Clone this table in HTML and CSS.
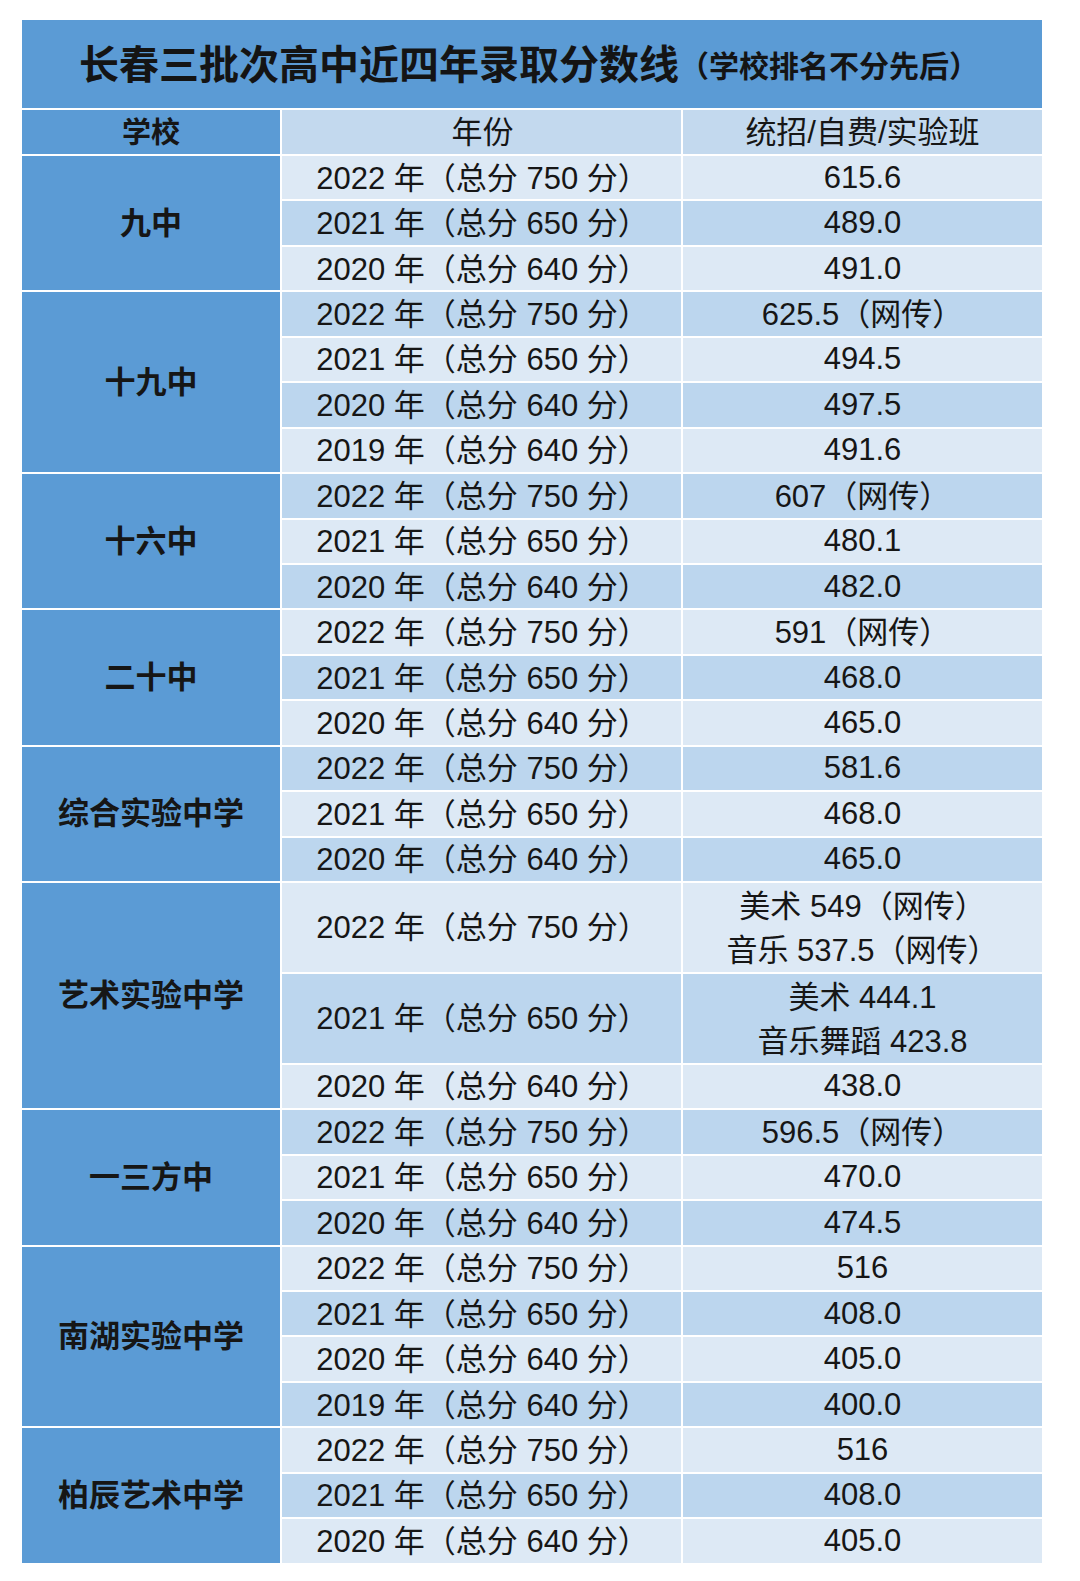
FILE: index.html
```html
<!DOCTYPE html>
<html lang="zh-CN">
<head>
<meta charset="utf-8">
<title>长春三批次高中近四年录取分数线</title>
<link rel="stylesheet" href="styles.css">
</head>
<body>
<div class="sheet">
  <div class="title"><span class="main">长春三批次高中近四年录取分数线</span><span class="sub">（学校排名不分先后）</span></div>
  <div class="hd school">学校</div>
  <div class="hd year">年份</div>
  <div class="hd val">统招/自费/实验班</div>

  <div class="school s3">九中</div>
  <div class="year l">2022 年（总分 750 分）</div><div class="val l">615.6</div>
  <div class="year m">2021 年（总分 650 分）</div><div class="val m">489.0</div>
  <div class="year l">2020 年（总分 640 分）</div><div class="val l">491.0</div>

  <div class="school s4">十九中</div>
  <div class="year m">2022 年（总分 750 分）</div><div class="val m cjk">625.5（网传）</div>
  <div class="year l">2021 年（总分 650 分）</div><div class="val l">494.5</div>
  <div class="year m">2020 年（总分 640 分）</div><div class="val m">497.5</div>
  <div class="year l">2019 年（总分 640 分）</div><div class="val l">491.6</div>

  <div class="school s3">十六中</div>
  <div class="year m">2022 年（总分 750 分）</div><div class="val m cjk">607（网传）</div>
  <div class="year l">2021 年（总分 650 分）</div><div class="val l">480.1</div>
  <div class="year m">2020 年（总分 640 分）</div><div class="val m">482.0</div>

  <div class="school s3">二十中</div>
  <div class="year l">2022 年（总分 750 分）</div><div class="val l cjk">591（网传）</div>
  <div class="year m">2021 年（总分 650 分）</div><div class="val m">468.0</div>
  <div class="year l">2020 年（总分 640 分）</div><div class="val l">465.0</div>

  <div class="school s3">综合实验中学</div>
  <div class="year m">2022 年（总分 750 分）</div><div class="val m">581.6</div>
  <div class="year l">2021 年（总分 650 分）</div><div class="val l">468.0</div>
  <div class="year m">2020 年（总分 640 分）</div><div class="val m">465.0</div>

  <div class="school s5">艺术实验中学</div>
  <div class="year l tall">2022 年（总分 750 分）</div><div class="val l tall"><span>美术 549（网传）</span><span>音乐 537.5（网传）</span></div>
  <div class="year m tall">2021 年（总分 650 分）</div><div class="val m tall"><span>美术 444.1</span><span>音乐舞蹈 423.8</span></div>
  <div class="year l">2020 年（总分 640 分）</div><div class="val l">438.0</div>

  <div class="school s3">一三方中</div>
  <div class="year m">2022 年（总分 750 分）</div><div class="val m cjk">596.5（网传）</div>
  <div class="year l">2021 年（总分 650 分）</div><div class="val l">470.0</div>
  <div class="year m">2020 年（总分 640 分）</div><div class="val m">474.5</div>

  <div class="school s4">南湖实验中学</div>
  <div class="year l">2022 年（总分 750 分）</div><div class="val l">516</div>
  <div class="year m">2021 年（总分 650 分）</div><div class="val m">408.0</div>
  <div class="year l">2020 年（总分 640 分）</div><div class="val l">405.0</div>
  <div class="year m">2019 年（总分 640 分）</div><div class="val m">400.0</div>

  <div class="school s3">柏辰艺术中学</div>
  <div class="year l">2022 年（总分 750 分）</div><div class="val l">516</div>
  <div class="year m">2021 年（总分 650 分）</div><div class="val m">408.0</div>
  <div class="year l">2020 年（总分 640 分）</div><div class="val l">405.0</div>
</div>
</body>
</html>
```

FILE: styles.css
```css
html, body {
  margin: 0;
  padding: 0;
  background: #ffffff;
}
body {
  font-family: "Liberation Sans", "Noto Sans CJK SC", sans-serif;
  color: #161616;
}
.sheet {
  margin: 20px 0 0 22px;
  width: 1020px;
  display: grid;
  grid-template-columns: 258px 399px 359px;
  grid-template-rows: 88px 44px;
  grid-auto-rows: 43.45px;
  gap: 2px;
  background: #ffffff;
}
.sheet > div {
  display: flex;
  align-items: center;
  justify-content: center;
  box-sizing: border-box;
}
.title {
  grid-column: 1 / -1;
  background: #5b9bd5;
  color: #141414;
  font-weight: bold;
  padding: 0 6px 4px 0;
}
.title .main {
  font-size: 40px;
}
.title .sub {
  font-size: 30px;
  padding-top: 4px;
}
.hd {
  font-size: 29px;
  padding-bottom: 5px;
}
.hd.year, .hd.val {
  background: #c3d9ee;
}
.school {
  grid-column: 1;
  background: #5b9bd5;
  font-weight: bold;
  font-size: 31px;
  padding-bottom: 6px;
}
.hd.school {
  font-size: 29px;
  padding-bottom: 5px;
}
.s3 { grid-row: span 3; }
.s4 { grid-row: span 4; }
.s5 { grid-row: span 5; }
.year {
  grid-column: 2;
  font-size: 31px;
  padding: 0 0 5px 2px;
}
.val {
  grid-column: 3;
  font-size: 31px;
}
.val.cjk {
  padding-bottom: 5px;
}
.tall {
  grid-row: span 2;
}
.val.tall {
  flex-direction: column;
  line-height: 44px;
  padding-top: 4px;
}
.l { background: #dde9f5; }
.m { background: #bcd6ee; }
```
